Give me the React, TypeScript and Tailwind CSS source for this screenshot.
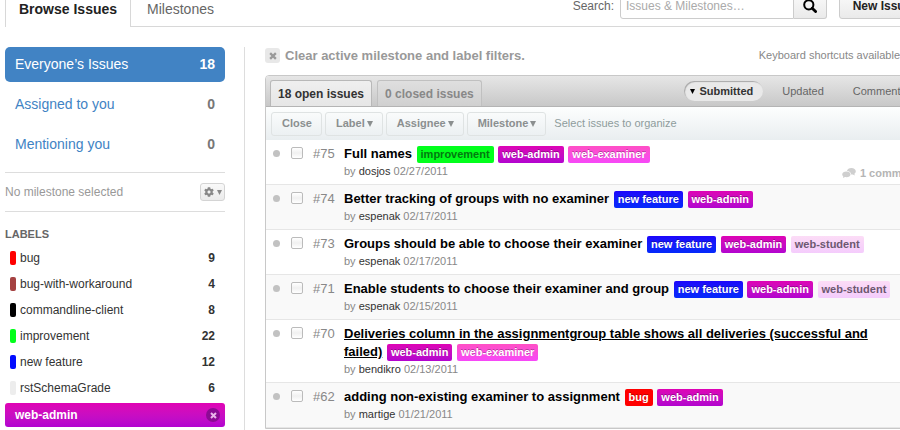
import { FaCog } from "react-icons/fa";

const tagStyles: Record<string, string> = {
  bug: "bg-[#ff0000] text-white [text-shadow:0_-1px_0_rgba(0,0,0,0.3)]",
  improvement: "bg-[#02ff1c] text-[#037a10]",
  "new feature": "bg-linear-to-b from-[#1c05fb] to-[#0329fb] text-white [text-shadow:0_-1px_0_rgba(0,0,0,0.3)]",
  "web-admin": "bg-linear-to-b from-[#de02b5] to-[#b203cf] text-white [text-shadow:0_-1px_0_rgba(0,0,0,0.3)]",
  "web-examiner": "bg-linear-to-b from-[#ff4fc4] to-[#f648f8] text-white [text-shadow:0_-1px_0_rgba(0,0,0,0.3)]",
  "web-student": "bg-linear-to-b from-[#fcdcf6] to-[#f4ccfc] text-[#6d5870]",
};

const labels = [
  { name: "bug", count: 9, color: "bg-[#ff0000]" },
  { name: "bug-with-workaround", count: 4, color: "bg-[#a54242]" },
  { name: "commandline-client", count: 8, color: "bg-black" },
  { name: "improvement", count: 22, color: "bg-[#02ff1c]" },
  { name: "new feature", count: 12, color: "bg-[#020cff]" },
  { name: "rstSchemaGrade", count: 6, color: "bg-[#ededed]" },
];

type Issue = {
  id: number;
  title: string;
  tags: string[];
  author: string;
  date: string;
  comments?: string;
  focused?: boolean;
};

const issues: Issue[] = [
  { id: 75, title: "Full names", tags: ["improvement", "web-admin", "web-examiner"], author: "dosjos", date: "02/27/2011", comments: "1 comment" },
  { id: 74, title: "Better tracking of groups with no examiner", tags: ["new feature", "web-admin"], author: "espenak", date: "02/17/2011" },
  { id: 73, title: "Groups should be able to choose their examiner", tags: ["new feature", "web-admin", "web-student"], author: "espenak", date: "02/17/2011" },
  { id: 71, title: "Enable students to choose their examiner and group", tags: ["new feature", "web-admin", "web-student"], author: "espenak", date: "02/15/2011" },
  { id: 70, title: "Deliveries column in the assignmentgroup table shows all deliveries (successful and failed)", tags: ["web-admin", "web-examiner"], author: "bendikro", date: "02/13/2011", focused: true },
  { id: 62, title: "adding non-existing examiner to assignment", tags: ["bug", "web-admin"], author: "martige", date: "01/21/2011" },
];

function Cross({ className }: { className: string }) {
  return (
    <svg viewBox="0 0 7 7" className={className} aria-hidden="true">
      <path d="M1 1L6 6M6 1L1 6" stroke="currentColor" strokeWidth="2" fill="none" />
    </svg>
  );
}

function Caret({ className }: { className: string }) {
  return (
    <svg viewBox="0 0 6 6" className={className} aria-hidden="true">
      <path d="M0 0H6L3 6Z" fill="currentColor" />
    </svg>
  );
}

function Magnifier() {
  return (
    <svg viewBox="0 0 14 14" className="size-[14px]" aria-hidden="true" fill="none" stroke="currentColor">
      <circle cx="5.8" cy="5.8" r="4.6" strokeWidth="2" />
      <path d="M9.2 9.2L12.6 12.6" strokeWidth="2.8" strokeLinecap="round" />
    </svg>
  );
}

function Bubbles() {
  return (
    <svg viewBox="0 0 14 10" className="h-[10px] w-[14px]" aria-hidden="true" fill="#cfcfcf">
      <path d="M9.4 0C11.9 0 13.8 1.4 13.8 3.3C13.8 4.4 13.2 5.2 12.4 5.8L12.8 7.4L10.8 6.5L9.2 6.5C9 4.3 7.3 3 5 2.9C5.3 1.2 7.1 0 9.4 0Z" />
      <path d="M4.4 3.6C6.9 3.6 8.5 4.8 8.5 6.4C8.5 8 6.8 9.2 4.4 9.2C3.9 9.2 3.4 9.2 3 9.1L0.9 10L1.3 8.4C0.6 7.9 0.2 7.2 0.2 6.4C0.2 4.8 2 3.6 4.4 3.6Z" />
    </svg>
  );
}

function Header() {
  return (
    <header className="flex h-[27px] items-end justify-between overflow-hidden shadow-[inset_0_-1px_0_#d8d8d8]">
      <nav className="flex text-sm">
        <a href="#issues" className="flex h-[37px] items-center border-x border-t border-[#d8d8d8] bg-white px-[13px] font-bold text-[#222]">
          Browse Issues
        </a>
        <a href="#milestones" className="flex h-[37px] items-center px-4 text-[#666]">
          Milestones
        </a>
      </nav>
      <div className="flex items-center pb-2 text-xs">
        <label htmlFor="search" className="pr-[6px] text-[#666]">
          Search:
        </label>
        <input
          id="search"
          type="text"
          placeholder="Issues & Milestones…"
          className="h-[26px] w-[174px] rounded-l-[3px] border border-[#ccc] bg-white px-[5px] placeholder:text-[#aaa]"
        />
        <button
          type="button"
          aria-label="Search"
          className="flex h-[26px] w-[33px] items-center justify-center rounded-r-[3px] border border-l-0 border-[#ccc] bg-linear-to-b from-[#fafafa] to-[#eaeaea] text-black"
        >
          <Magnifier />
        </button>
        <button
          type="button"
          className="ml-3 h-[26px] w-[86px] rounded-[3px] border border-[#ccc] bg-linear-to-b from-[#fafafa] to-[#eaeaea] text-center font-bold whitespace-nowrap text-[#222]"
        >
          New Issue
        </button>
      </div>
    </header>
  );
}

function Sidebar() {
  return (
    <aside className="w-[220px] shrink-0">
      <nav className="flex flex-col gap-[5px] text-sm">
        <a href="#everyone" className="flex h-[35px] items-center justify-between rounded-[5px] bg-[#4183c4] px-2.5 pb-0.5 text-white">
          Everyone’s Issues <b>18</b>
        </a>
        <a href="#assigned" className="flex h-[35px] items-center justify-between px-2.5 pb-0.5 text-[#4183c4]">
          Assigned to you <b className="text-[#777]">0</b>
        </a>
        <a href="#mentioning" className="flex h-[35px] items-center justify-between px-2.5 pb-0.5 text-[#4183c4]">
          Mentioning you <b className="text-[#777]">0</b>
        </a>
      </nav>
      <div className="mt-[10px] flex h-10 items-center justify-between border-y border-[#ddd] text-xs text-[#999]">
        No milestone selected
        <button
          type="button"
          aria-label="Choose milestone"
          className="flex h-[18px] w-[25px] items-center justify-center gap-[3px] rounded-[3px] border border-[#d4d4d4] bg-linear-to-b from-[#f9f9f9] to-[#ebebeb] text-[#888]"
        >
          <FaCog className="size-[10px]" />
          <Caret className="size-[5px]" />
        </button>
      </div>
      <h2 className="mt-[15px] text-[11px] leading-[14px] font-bold text-[#666]">LABELS</h2>
      <ul className="mt-1 flex flex-col text-xs text-[#333]">
        {labels.map((label) => (
          <li key={label.name}>
            <a href="#label" className="flex h-[26px] items-center pr-[10px] pl-[5px]">
              <span className={`mr-1 h-[14px] w-[6px] rounded-[2px] ${label.color}`} />
              <span className="flex-1">{label.name}</span>
              <b>{label.count}</b>
            </a>
          </li>
        ))}
        <li className="mt-0.5">
          <a
            href="#web-admin"
            className="flex h-6 items-center justify-between rounded-[3px] bg-linear-to-b from-[#e002b4] to-[#b203d0] pr-[5px] pl-2.5 font-bold text-white"
          >
            web-admin
            <span className="flex size-[14px] items-center justify-center rounded-full bg-[#8c0a94] text-[#eab5ea]">
              <Cross className="size-[7px]" />
            </span>
          </a>
        </li>
      </ul>
    </aside>
  );
}

function IssueRow({ issue, shaded }: { issue: Issue; shaded: boolean }) {
  return (
    <li className={`flex border-b border-[#e6e6e6] py-[5px] pl-[7px] ${shaded ? "bg-[#f9f9f9]" : "bg-white"}`}>
      <span className="mt-[5px] size-[7px] shrink-0 rounded-full bg-[#c2c2c2]" />
      <input
        type="checkbox"
        aria-label={`Select issue ${issue.id}`}
        className="mt-[2px] ml-[11px] size-3 shrink-0 appearance-none rounded-[2px] border border-[#bbb] bg-linear-to-b from-white via-[#f0f0f0] to-white"
      />
      <span className="ml-[10px] w-[31px] shrink-0 text-[13px] leading-[18px] text-[#888]">#{issue.id}</span>
      <div className="flex-1 pr-[6px]">
        <h3 className="pr-[10px] text-[13px] leading-[18px] font-bold text-black">
          <a href="#issue" className={issue.focused ? "underline" : ""}>
            {issue.title}
          </a>
          {issue.tags.map((tag) => (
            <span key={tag}>
              {" "}
              <a href="#tag" className={`ml-px inline-block rounded-[2px] px-1 align-bottom text-[11px] leading-[17px] ${tagStyles[tag]}`}>
                {tag}
              </a>
            </span>
          ))}
        </h3>
        <div className="flex h-4 items-center justify-between text-[11px] text-[#888]">
          <p>
            by{" "}
            <a href="#author" className="text-[#333]">
              {issue.author}
            </a>{" "}
            {issue.date}
          </p>
          {issue.comments && (
            <a href="#comments" className="flex items-center gap-1 pt-1 font-bold text-[#b5b5b5]">
              <Bubbles />
              {issue.comments}
            </a>
          )}
        </div>
      </div>
    </li>
  );
}

function IssueBrowser() {
  const action = "flex h-6 items-center gap-[2px] rounded-[3px] border border-[#dfe3e3] pr-[9px] pl-[10px]";
  return (
    <section className="overflow-hidden rounded-t-[4px] border border-[#c8c8c8]">
      <div className="flex h-[31px] items-end justify-between border-b border-[#b4b4b4] bg-linear-to-b from-[#e6e6e6] to-[#c8c8c8] pl-1">
        <div className="flex gap-[5px] text-xs font-bold">
          <button
            type="button"
            className="h-[26px] rounded-t-[3px] border border-b-0 border-[#b8b8b8] bg-linear-to-b from-[#efefef] to-[#e6e6e6] px-[7px] text-[#333]"
          >
            18 open issues
          </button>
          <button
            type="button"
            className="h-[26px] rounded-t-[3px] border border-b-0 border-[#c0c0c0] bg-linear-to-b from-[#dfdfdf] to-[#d0d0d0] px-[7px] text-[#888]"
          >
            0 closed issues
          </button>
        </div>
        <div className="flex items-center gap-[9px] pr-2 pb-[5px] text-[11px] text-[#666]">
          <button
            type="button"
            className="flex h-5 items-center gap-1 rounded-full bg-[#e9e9e9] pr-[10px] pl-[6px] font-bold text-[#333] shadow-[inset_1px_1px_1px_#a8a8a8]"
          >
            <Caret className="size-[5px] text-black" />
            Submitted
          </button>
          <button type="button" className="px-[10px]">
            Updated
          </button>
          <button type="button" className="px-[10px]">
            Comments
          </button>
        </div>
      </div>
      <div className="flex h-[33px] items-center gap-[3px] bg-linear-to-b from-[#fdfefe] to-[#e9eef0] pl-[5px] text-[11px] font-bold text-[#8b8f8f]">
        <button type="button" className={action}>
          Close
        </button>
        <button type="button" className={action}>
          Label <Caret className="size-[6px]" />
        </button>
        <button type="button" className={action}>
          Assignee <Caret className="size-[6px]" />
        </button>
        <button type="button" className={action}>
          Milestone <Caret className="size-[6px]" />
        </button>
        <span className="pl-[5px] font-normal text-[#8e9c9c]">Select issues to organize</span>
      </div>
      <ul>
        {issues.map((issue, index) => (
          <IssueRow key={issue.id} issue={issue} shaded={index % 2 === 1} />
        ))}
      </ul>
    </section>
  );
}

export default function App() {
  return (
    <div className="h-screen overflow-hidden bg-white font-['Liberation_Sans',Arial,sans-serif]">
      <div className="min-w-[925px] pl-[5px]">
        <Header />
        <div className="mt-5 flex">
          <Sidebar />
          <main className="ml-[19px] min-h-[400px] flex-1 border-l border-[#ddd] pl-5">
            <div className="flex h-7 items-start justify-between">
              <a href="#clear" className="flex h-[17px] items-center gap-[5px] text-[13px] font-bold text-[#999]">
                <span className="flex size-[15px] items-center justify-center rounded-[3px] bg-[#e8e8e8] text-[#999]">
                  <Cross className="size-2" />
                </span>
                Clear active milestone and label filters.
              </a>
              <p className="pr-[25px] text-[11px] leading-[17px] text-[#888]">Keyboard shortcuts available</p>
            </div>
            <IssueBrowser />
          </main>
        </div>
      </div>
    </div>
  );
}
